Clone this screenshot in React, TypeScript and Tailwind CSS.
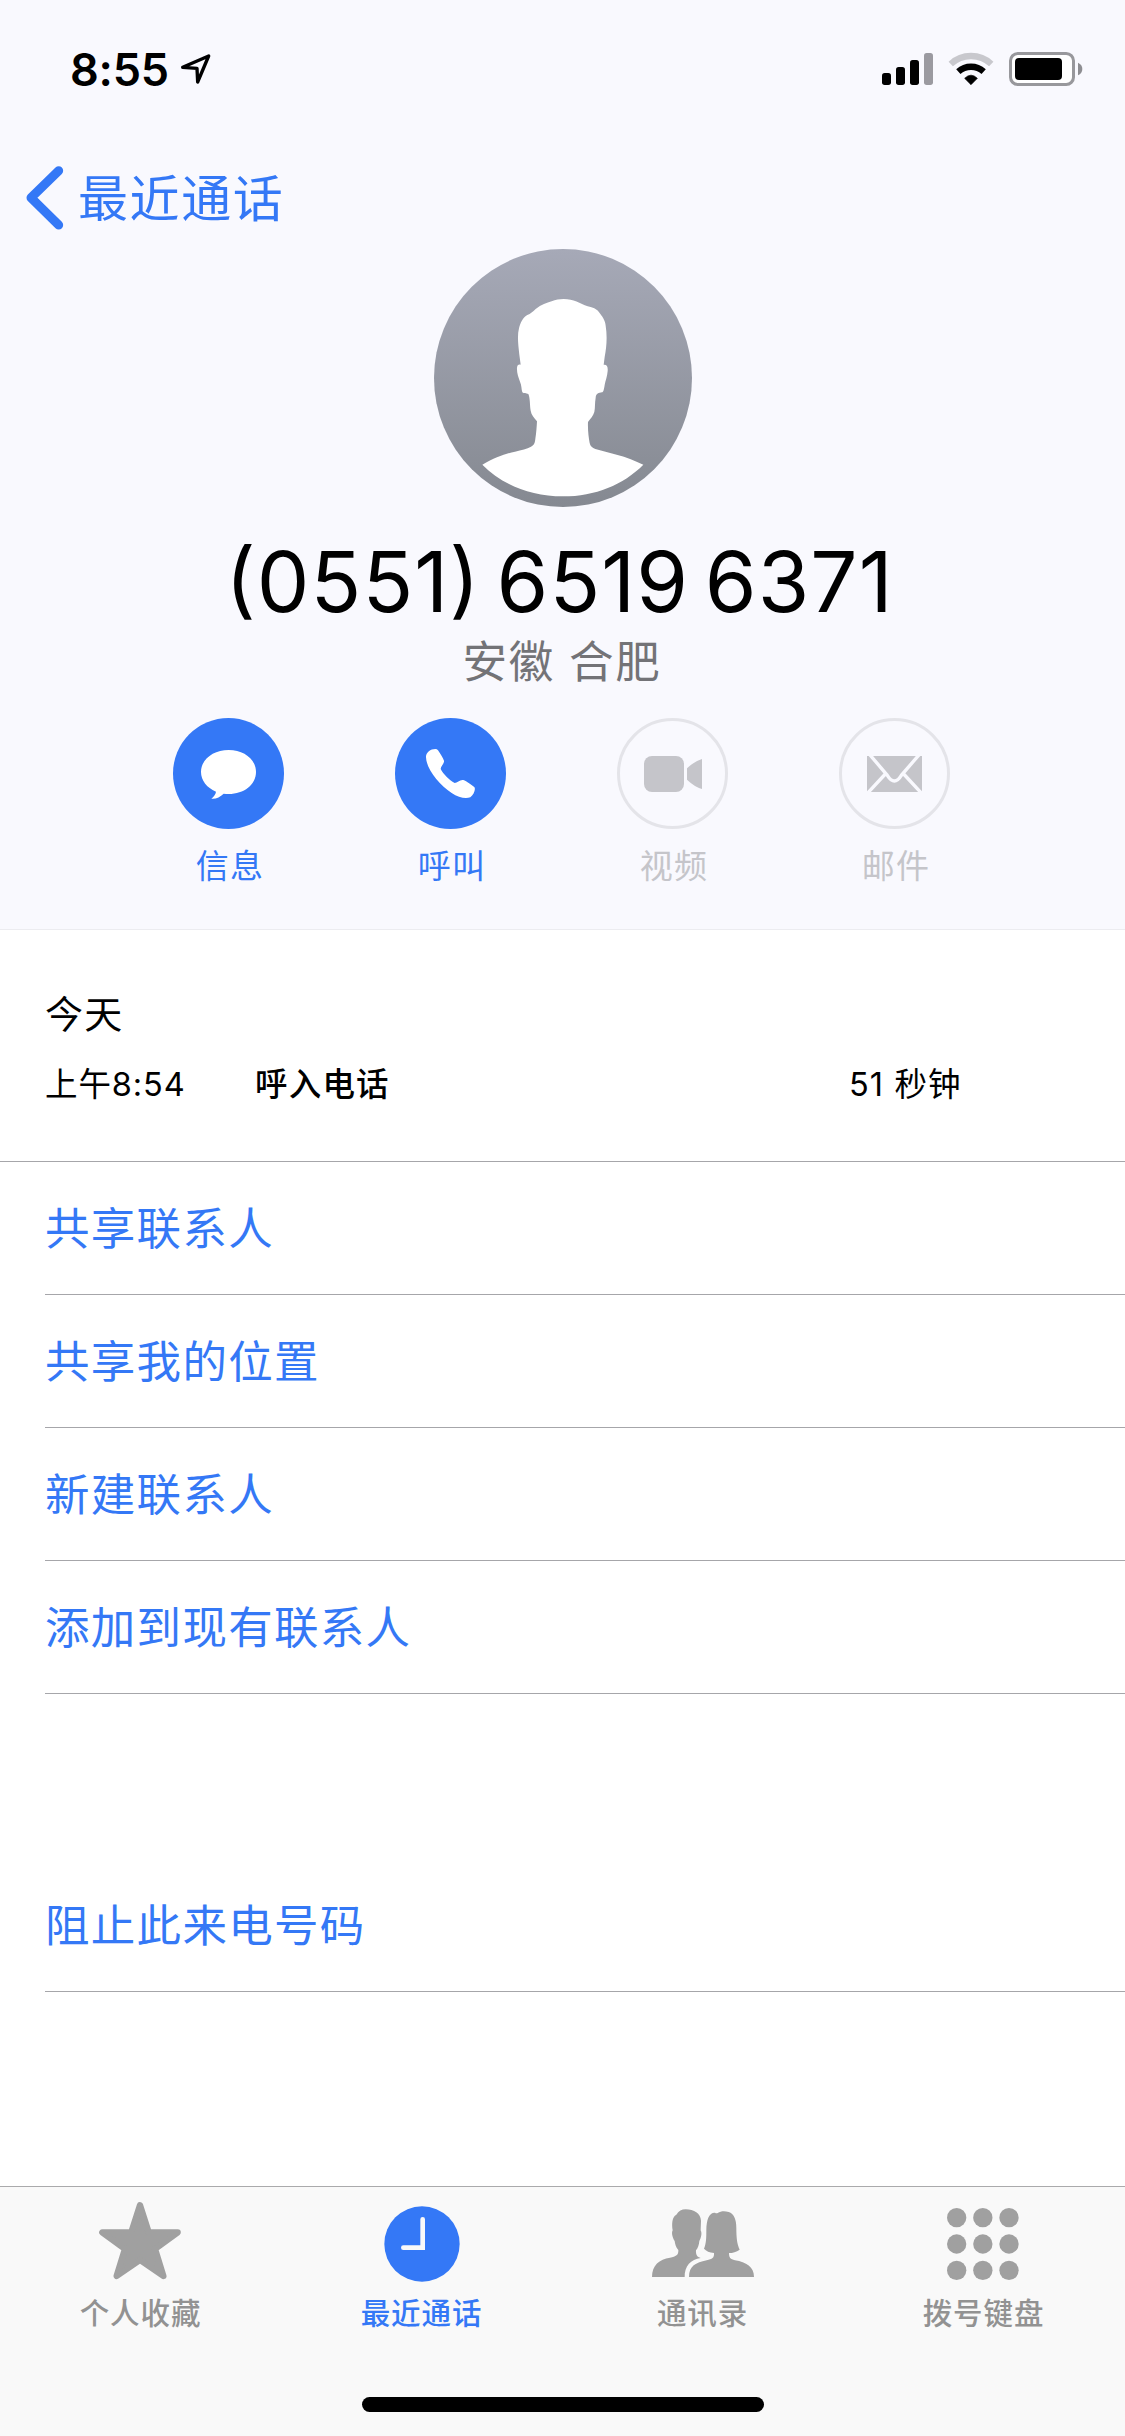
import type { ReactNode } from "react";

function StatusBar() {
  return (
    <div className="flex h-[138px] items-center pl-[70px] pr-[42px]">
      <span className="w-[101px] whitespace-nowrap text-[45px] font-semibold leading-none tracking-[-0.2px]">8:55</span>
      <svg className="ml-[8px]" width="34" height="34" viewBox="536 155 102 102">
        <path d="M547 201 L625 167 L592 245 L590 204 Z" fill="none" stroke="#000" strokeWidth="10" strokeLinejoin="round" />
      </svg>
      <div className="ml-auto flex items-center">
        <svg width="51" height="34" viewBox="126 66 153 102">
          <rect x="126" y="129" width="27" height="36" rx="8" />
          <rect x="168" y="111" width="27" height="54" rx="8" />
          <rect x="210" y="90" width="27" height="75" rx="8" />
          <rect x="252" y="69" width="27" height="96" rx="8" fill="#9b9aa0" />
        </svg>
        <svg className="ml-[15px]" width="46" height="34" viewBox="324 66 138 102">
          <path d="M332.3 102 A89 89 0 0 1 453.7 102" fill="none" stroke="#c8c8cd" strokeWidth="19" />
          <path d="M355 125 A56.5 56.5 0 0 1 431 125" fill="none" stroke="#000" strokeWidth="19" />
          <path d="M374 145 Q393 126 412 145 L393 164 Z" stroke="#000" strokeWidth="2" strokeLinejoin="round" />
        </svg>
        <svg className="ml-[15px]" width="74" height="34" viewBox="507 66 222 102">
          <rect x="511.500" y="70.500" width="189" height="93" rx="22" fill="#fff" stroke="#98989c" strokeWidth="9" />
          <rect x="525" y="84" width="141" height="66" rx="12" />
          <path d="M714 98 Q727 104 727 117 Q727 130 714 136 Z" fill="#8e8e92" />
        </svg>
      </div>
    </div>
  );
}

function Avatar() {
  return (
    <svg className="mx-auto block" width="258" height="258" viewBox="102 56 774 774">
      <defs>
        <linearGradient id="avatar-bg" x1="0" y1="0" x2="0" y2="1">
          <stop offset="0" stopColor="#a6a9b7" />
          <stop offset="1" stopColor="#858991" />
        </linearGradient>
      </defs>
      <circle cx="489" cy="443" r="387" fill="url(#avatar-bg)" />
      <path
        fill="#fff"
        d="M491 206 C521 206 540 219 563 228 C580 232 588 235 596 244 C607 258 616 270 617 286 C622 316 620 350 614 380 L611 403 C621 402 624 408 623 422 C622 438 616 452 614 464 C612 478 610 486 606 486 C596 488 588 489 587 502 C584 518 586 532 583 545 C580 557 570 566 564 575 C563 600 566 622 569 638 C571 648 577 652 586 656 L650 673 C680 680 706 692 730 703 C670 763 586 798 489 798 C392 798 306 763 247 703 C285 682 315 670 345 664 C365 659 381 655 393 649 C403 644 405 636 406 625 C409 607 410 590 411 573 C402 562 394 554 392 541 C389 525 391 505 385 491 C378 489 371 491 367 486 C364 478 365 464 360 454 C355 440 350 428 351 412 C352 405 355 401 362 403 L358 373 C355 344 351 318 357 294 C361 277 369 261 382 254 C392 251 398 244 407 236 C424 223 440 217 455 213 C467 208 478 206 491 206 Z"
      />
    </svg>
  );
}

function Action({ label, active, children }: { label: string; active?: boolean; children: ReactNode }) {
  return (
    <div className={active ? "w-[111px] text-[#3478f6]" : "w-[111px] text-[#c5c5ca]"}>
      <div
        className={
          active
            ? "size-[111px] overflow-hidden rounded-full bg-[#3478f6]"
            : "size-[111px] overflow-hidden rounded-full border-[3px] border-[#e4e4e9]"
        }
      >
        {children}
      </div>
      <div className="mt-[13px] whitespace-nowrap pl-[3px] text-center text-[33px] leading-[48px] tracking-[1.3px]">{label}</div>
    </div>
  );
}

function ListRow({ label }: { label: string }) {
  return (
    <div className="ml-[45px] flex h-[133px] items-center border-b border-[#a6a6aa] pt-[2px] text-[44.500px] tracking-[1.300px] text-[#3478f6]">
      {label}
    </div>
  );
}

function Tab({ label, active, children }: { label: string; active?: boolean; children: ReactNode }) {
  return (
    <div className={active ? "w-[281px] text-[#3478f6]" : "w-[281px] text-[#929292]"}>
      <div className="flex h-[104px] justify-center">{children}</div>
      <div className="pl-[2px] text-center text-[29.500px] font-medium leading-[44px] tracking-[0.900px]">{label}</div>
    </div>
  );
}

const shareRows = ["共享联系人", "共享我的位置", "新建联系人", "添加到现有联系人"];

export default function App() {
  return (
    <div className="flex h-[2436px] w-[1125px] flex-col overflow-hidden bg-white font-['Inter','Noto_Sans_CJK_SC',sans-serif] text-black">
      <header className="h-[930px] border-b border-[#ececf0] bg-[#f9f9fe]">
        <StatusBar />
        <div className="-mb-[9px] flex h-[120px] items-center pl-[26px] text-[#3478f6]">
          <svg width="39" height="64" viewBox="78 500 117 192">
            <path d="M176 514 L93 595.500 L176 677" fill="none" stroke="currentColor" strokeWidth="27" strokeLinecap="round" strokeLinejoin="round" />
          </svg>
          <span className="ml-[13px] pt-[2px] text-[50px] leading-none tracking-[1.600px]">最近通话</span>
        </div>
        <Avatar />
        <h1 className="mt-[25px] whitespace-nowrap pr-[6px] text-center text-[83.500px] font-normal leading-[100px] tracking-[1.100px] [font-feature-settings:'case'] [word-spacing:-9px]">(0551) 6519 6371</h1>
        <p className="mt-px pr-px text-center text-[44.500px] leading-[58px] tracking-[1.700px] text-[#737377]">安徽 合肥</p>
        <div className="mt-[27px] flex gap-[111px] pl-[173px]">
          <Action label="信息" active>
            <svg width="111" height="111" viewBox="69 54 333 333">
              <path fill="#fff" d="M236 150 C282 150 318 178 318 216 C318 254 282 282 236 282 Q228 282 221 281 C210 291 197 298 184 296 C191 290 197 283 198 275 C170 263 153 241 153 216 C153 178 190 150 236 150 Z" />
            </svg>
          </Action>
          <Action label="呼叫" active>
            <svg width="111" height="111" viewBox="735 54 333 333">
              <path fill="#fff" d="M828 172 C827 158 841 147 856 147 Q861 147 864 151 C870 160 879 174 882 182 C884 189 872 199 872 207 C880 222 897 240 914 249 C922 248 930 238 940 240 C950 244 965 255 973 261 C978 268 971 284 961 292 C945 297 925 292 905 279 C868 255 829 207 828 172 Z" />
            </svg>
          </Action>
          <Action label="视频">
            <svg className="-m-[3px]" width="111" height="111" viewBox="81 54 333 333">
              <rect x="162" y="168" width="120" height="108" rx="24" fill="currentColor" />
              <path d="M291 205 Q313 184 336 177 L336 267 Q313 260 291 239 Z" fill="currentColor" />
            </svg>
          </Action>
          <Action label="邮件">
            <svg className="-m-[3px]" width="111" height="111" viewBox="747 54 333 333">
              <rect x="831" y="168" width="165" height="108" fill="currentColor" />
              <path d="M836 160 L892 226 Q913 260 934 226 L991 160 M886 222 L832 280 M941 222 L995 280" fill="none" stroke="#f9f9fe" strokeWidth="10" />
            </svg>
          </Action>
        </div>
      </header>

      <section className="h-[232px] border-b border-[#a6a6aa] pl-[45px] pt-[56px]">
        <div className="text-[38px] leading-[56px] tracking-[1.200px]">今天</div>
        <div className="mt-[15px] flex whitespace-nowrap text-[32.500px] leading-[56px]">
          <span className="w-[210px] tracking-[0.900px]">上午8:54</span>
          <span className="w-[594px] font-medium tracking-[1.200px]">呼入电话</span>
          <span className="tracking-[1.100px]">51 秒钟</span>
        </div>
      </section>

      <section>
        {shareRows.map((label) => (
          <ListRow key={label} label={label} />
        ))}
      </section>
      <section className="mt-[165px]">
        <ListRow label="阻止此来电号码" />
      </section>

      <nav className="mt-auto h-[250px] border-t border-[#aaaaac] bg-[#f9f9f9]">
        <div className="-ml-px flex">
          <Tab label="个人收藏">
            <svg className="mt-[14px]" width="84" height="80" viewBox="144 93 252 240">
              <path d="M270 106 L296 187 L383 187 L315 237 L340 318 L270 270 L200 318 L225 237 L157 187 L244 187 Z" fill="#a0a0a0" stroke="#a0a0a0" strokeWidth="19" strokeLinejoin="round" />
            </svg>
          </Tab>
          <Tab label="最近通话" active>
            <svg className="ml-[2px] mt-[19px]" width="76" height="76" viewBox="1002 108 228 228">
              <circle cx="1116" cy="222" r="113" fill="#3478f6" />
              <path d="M1118 148 V233 H1060" fill="none" stroke="#f9f9f9" strokeWidth="14" strokeLinecap="round" />
            </svg>
          </Tab>
          <Tab label="通讯录">
            <svg className="ml-[2px] mt-[22px]" width="102" height="68" viewBox="156 117 306 204">
              <path fill="#a0a0a0" d="M156 321 C156 285 178 268 210 263 C228 259 236 256 235 240 C228 233 225 222 224 213 C219 206 213 190 218 181 C215 162 216 140 229 134 C236 123 245 118 257 118 C282 118 302 130 303 152 L302 181 C307 190 303 204 298 213 C297 224 294 235 288 241 C287 255 292 262 302 264 C273 267 253 289 254 321 Z" />
              <path fill="#a0a0a0" d="M267 321 C267 288 287 278 320 271 C337 267 343 264 342 249 C329 248 318 243 312 236 C319 221 319 201 319 181 C319 148 328 127 345 128 Q349 131 353 129 C363 123 373 122 386 126 C402 131 409 149 409 173 C409 203 411 222 419 239 C409 246 398 249 387 249 C387 263 391 267 405 271 C439 277 462 290 462 321 Z" />
            </svg>
          </Tab>
          <Tab label="拨号键盘">
            <svg className="mt-[20px]" width="74" height="74" viewBox="1037 111 222 222" fill="#a0a0a0">
              {[143, 222, 301].map((cy) =>
                [1069, 1147.5, 1226].map((cx) => <circle key={`${cx}-${cy}`} cx={cx} cy={cy} r="29" />)
              )}
            </svg>
          </Tab>
        </div>
        <div className="mx-auto mt-[62px] h-[15px] w-[402px] rounded-full bg-black" />
      </nav>
    </div>
  );
}
